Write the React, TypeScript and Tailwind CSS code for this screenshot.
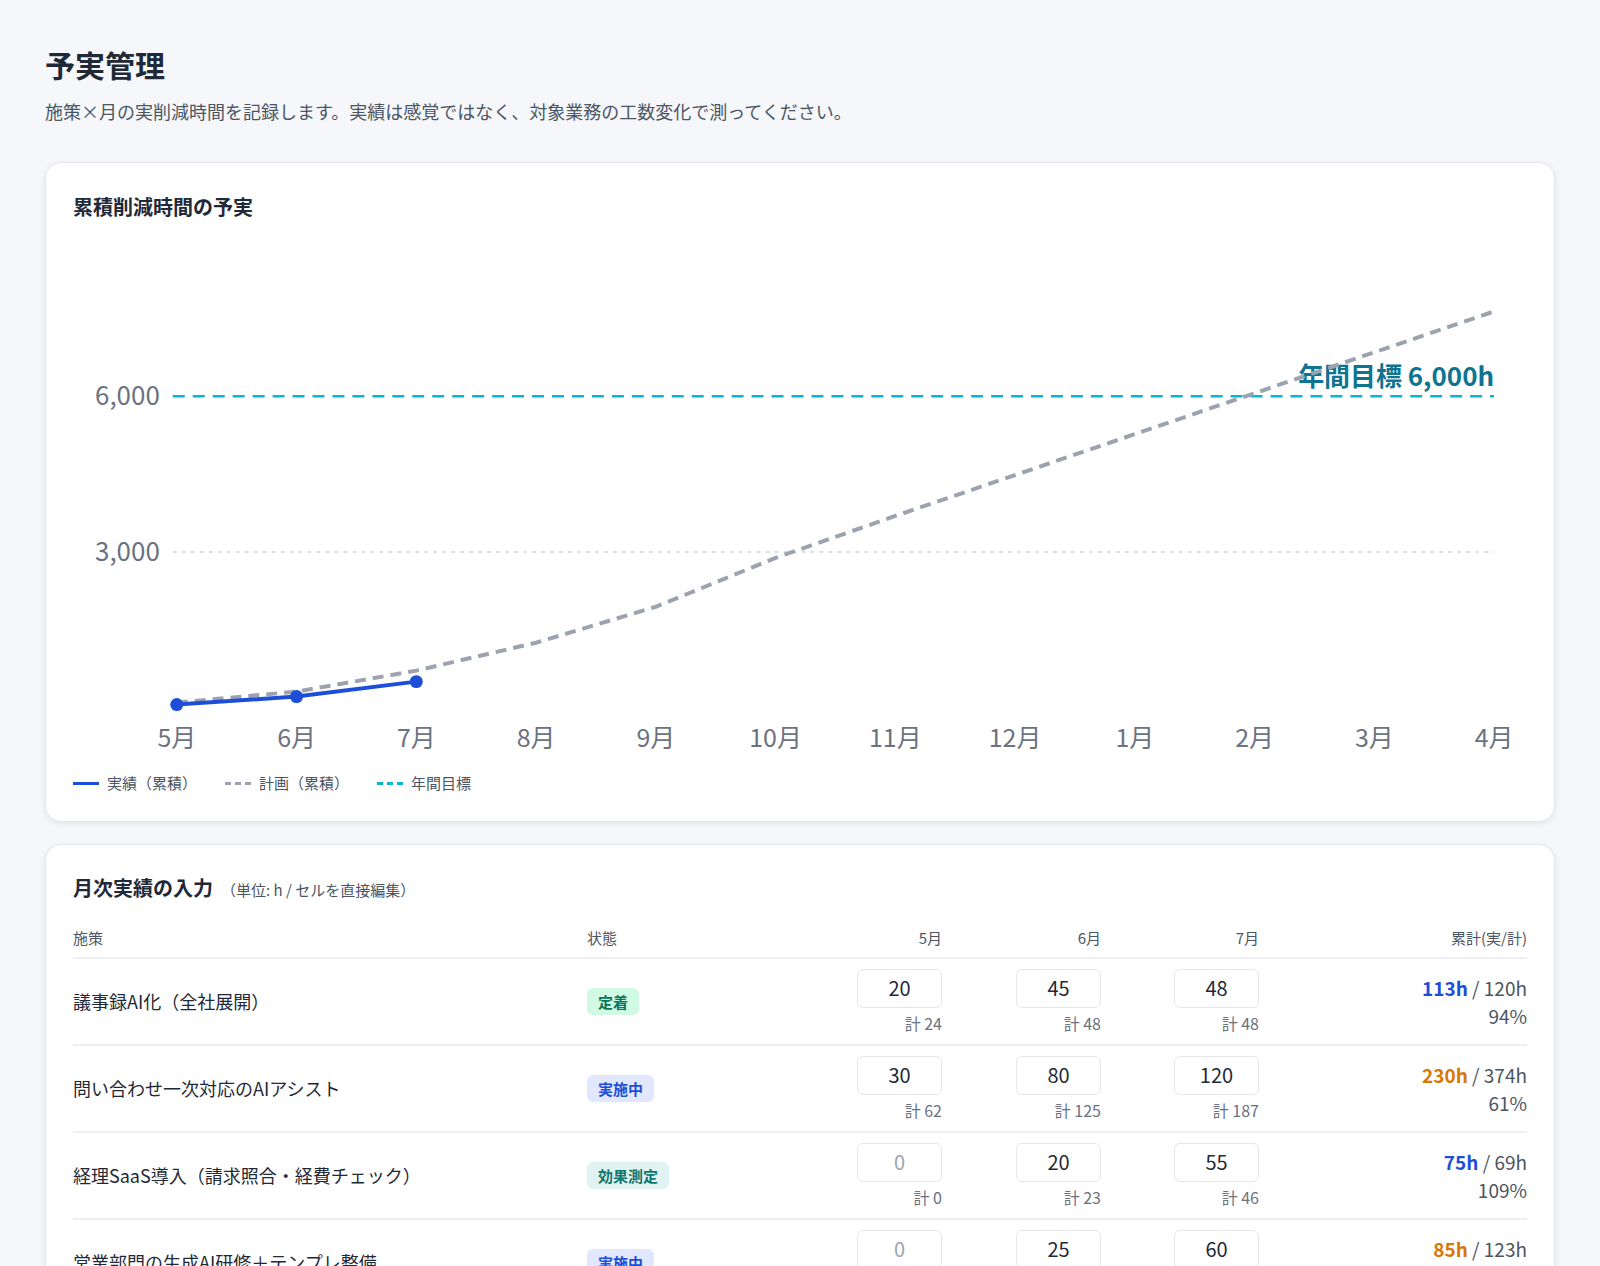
const months = ["5月", "6月", "7月", "8月", "9月", "10月", "11月", "12月", "1月", "2月", "3月", "4月"];
const planY = [463, 452, 431, 403, 367, 318, 276, 235, 194, 153, 112, 71];
const actualY = [465, 457, 442];
const x = (i: number) => 104 + i * 120;

const rows = [
  { name: "議事録AI化（全社展開）", status: "定着", tone: "bg-[#d1fae5] text-[#047857]", vals: [20, 45, 48], plans: [24, 48, 48], act: "113h", plan: "120h", pct: "94%", good: true },
  { name: "問い合わせ一次対応のAIアシスト", status: "実施中", tone: "bg-[#e0e7ff] text-[#1d4ed8]", vals: [30, 80, 120], plans: [62, 125, 187], act: "230h", plan: "374h", pct: "61%", good: false },
  { name: "経理SaaS導入（請求照合・経費チェック）", status: "効果測定", tone: "bg-[#e0f2f1] text-[#0f766e]", vals: [0, 20, 55], plans: [0, 23, 46], act: "75h", plan: "69h", pct: "109%", good: true },
  { name: "営業部門の生成AI研修＋テンプレ整備", status: "実施中", tone: "bg-[#e0e7ff] text-[#1d4ed8]", vals: [0, 25, 60], plans: [0, 41, 82], act: "85h", plan: "123h", pct: "69%", good: false },
];

const cols = "grid grid-cols-[514px_270px_85px_159px_158px_1fr]";

function Chart() {
  return (
    <svg viewBox="0 0 1457 520" className="w-full h-[520px] block">
      <line x1="100" x2="1424" y1="312" y2="312" stroke="#d1d5db" strokeWidth="1.5" strokeDasharray="4 5" />
      <line x1="100" x2="1424" y1="156" y2="156" stroke="#06b6d4" strokeWidth="2.5" strokeDasharray="12 8" />
      <text x="87" y="165" textAnchor="end" fontSize="26" fill="#6b7280">6,000</text>
      <text x="87" y="321" textAnchor="end" fontSize="26" fill="#6b7280">3,000</text>
      <text x="1424" y="146" textAnchor="end" fontSize="26" fontWeight="700" fill="#0e7490">年間目標 6,000h</text>
      <polyline points={planY.map((y, i) => `${x(i)},${y}`).join(" ")} fill="none" stroke="#9ca3af" strokeWidth="4" strokeDasharray="11 7" />
      <polyline points={actualY.map((y, i) => `${x(i)},${y}`).join(" ")} fill="none" stroke="#1d4ed8" strokeWidth="4" />
      {actualY.map((y, i) => <circle key={i} cx={x(i)} cy={y} r="6.5" fill="#1d4ed8" />)}
      {months.map((m, i) => (
        <text key={m} x={x(i)} y="508" textAnchor="middle" fontSize="25" fill="#6b7280">{m}</text>
      ))}
    </svg>
  );
}

export default function App() {
  return (
    <div className="min-h-[1266px] bg-[#f5f7fa] px-[45px] pt-[42px] text-[#1f2937]" style={{ fontFamily: '"Noto Sans CJK JP", "Noto Sans", sans-serif' }}>
      <h1 className="text-[30px] font-bold leading-[44px]">予実管理</h1>
      <p className="mt-[12px] text-[18px] text-[#4b5563]">施策×月の実削減時間を記録します。実績は感覚ではなく、対象業務の工数変化で測ってください。</p>

      <div className="mt-[37px] rounded-2xl border border-[#e5e7eb] bg-white px-[27px] pt-[29px] pb-[26px] shadow-[0_2px_6px_rgba(0,0,0,0.08)]">
        <h2 className="text-[20px] font-bold">累積削減時間の予実</h2>
        <div className="mt-[18px]"><Chart /></div>
        <div className="mt-[12px] flex items-center gap-7 text-[15px] text-[#4b5563]">
          <span className="flex items-center gap-2"><span className="w-[26px] h-[3px] bg-[#1d4ed8]" />実績（累積）</span>
          <span className="flex items-center gap-2"><span className="w-[26px] border-t-[3px] border-dashed border-[#9ca3af]" />計画（累積）</span>
          <span className="flex items-center gap-2"><span className="w-[26px] border-t-[3px] border-dashed border-[#06b6d4]" />年間目標</span>
        </div>
      </div>

      <div className="mt-[22px] rounded-2xl border border-[#e5e7eb] bg-white px-[27px] pt-[28px] shadow-[0_2px_6px_rgba(0,0,0,0.08)]">
        <h2 className="text-[20px] font-bold">月次実績の入力<span className="ml-2 text-[15px] font-normal text-[#4b5563]">（単位: h / セルを直接編集）</span></h2>
        <div className={`${cols} mt-[24px] border-b-2 border-[#eef0f3] pb-[8px] text-[15px] text-[#4b5563]`}>
          <span>施策</span><span>状態</span><span className="text-right">5月</span><span className="text-right">6月</span><span className="text-right">7月</span><span className="text-right">累計(実/計)</span>
        </div>
        {rows.map((r) => (
          <div key={r.name} className={`${cols} items-center h-[87px] border-b-2 border-[#eef0f3]`}>
            <span className="text-[18px]">{r.name}</span>
            <span><span className={`rounded-md px-[11px] py-[3px] text-[15px] font-semibold ${r.tone}`}>{r.status}</span></span>
            {r.vals.map((v, i) => (
              <div key={i} className="flex flex-col items-end">
                <div className={`w-[85px] h-[39px] rounded-md border border-[#e5e7eb] flex items-center justify-center text-[20px] ${v === 0 ? "text-[#9ca3af]" : ""}`}>{v}</div>
                <span className="mt-[3px] text-[16px] text-[#6b7280]">計 {r.plans[i]}</span>
              </div>
            ))}
            <div className="text-right text-[19px] text-[#4b5563] leading-[28px]">
              <div><span className={`font-semibold ${r.good ? "text-[#1d4ed8]" : "text-[#d97706]"}`}>{r.act}</span> / {r.plan}</div>
              <div>{r.pct}</div>
            </div>
          </div>
        ))}
      </div>
    </div>
  );
}
